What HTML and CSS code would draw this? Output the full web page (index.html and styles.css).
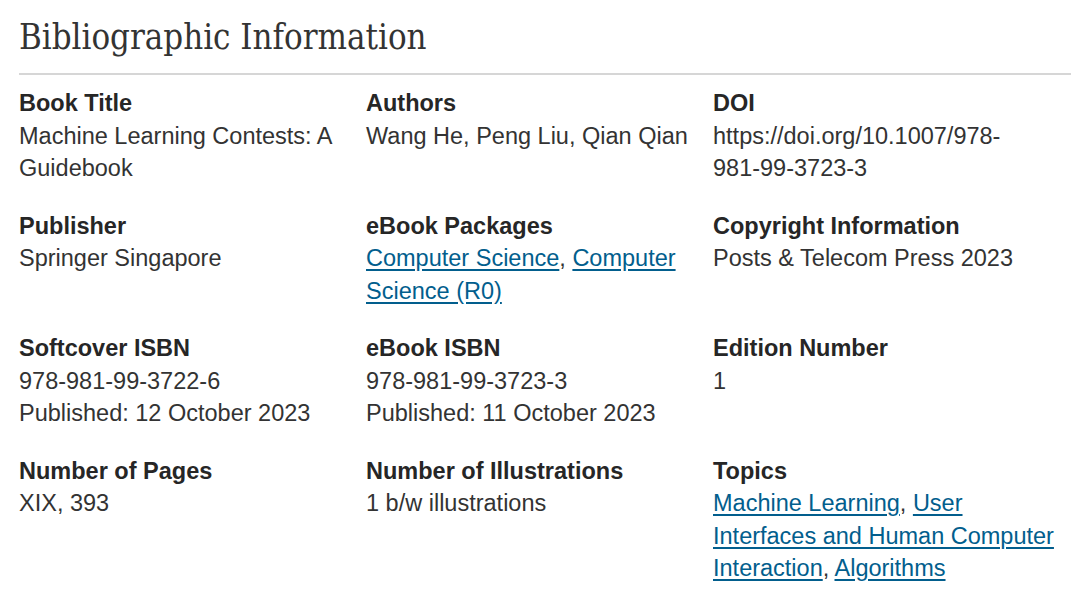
FILE: index.html
```html
<!DOCTYPE html>
<html lang="en">
<head>
<meta charset="utf-8">
<title>Bibliographic Information</title>
<link rel="stylesheet" href="styles.css">
</head>
<body>
<section class="biblio">
  <h2 class="biblio-title">Bibliographic Information</h2>
  <ul class="biblio-grid">
    <li class="item"><span class="label">Book Title</span><span class="value">Machine Learning Contests: A Guidebook</span></li>
    <li class="item"><span class="label">Authors</span><span class="value">Wang He, Peng Liu, Qian Qian</span></li>
    <li class="item"><span class="label">DOI</span><span class="value">https://doi.org/10.1007/978-<span class="nowrap">981-99-3723-3</span></span></li>
    <li class="item"><span class="label">Publisher</span><span class="value">Springer Singapore</span></li>
    <li class="item"><span class="label">eBook Packages</span><span class="value"><a href="#">Computer Science</a>, <a href="#">Computer Science (R0)</a></span></li>
    <li class="item"><span class="label">Copyright Information</span><span class="value">Posts &amp; Telecom Press 2023</span></li>
    <li class="item"><span class="label">Softcover ISBN</span><span class="value">978-981-99-3722-6</span><span class="value">Published: 12 October 2023</span></li>
    <li class="item"><span class="label">eBook ISBN</span><span class="value">978-981-99-3723-3</span><span class="value">Published: 11 October 2023</span></li>
    <li class="item"><span class="label">Edition Number</span><span class="value">1</span></li>
    <li class="item"><span class="label">Number of Pages</span><span class="value">XIX, 393</span></li>
    <li class="item"><span class="label">Number of Illustrations</span><span class="value">1 b/w illustrations</span></li>
    <li class="item"><span class="label">Topics</span><span class="value"><a href="#">Machine Learning</a>, <a href="#">User Interfaces and Human Computer Interaction</a>, <a href="#">Algorithms</a></span></li>
  </ul>
</section>
</body>
</html>
```

FILE: styles.css
```css
html, body {
  margin: 0;
  padding: 0;
  background: #ffffff;
}
.biblio {
  padding: 0 9px 0 19px;
  color: #333333;
  font-family: "Liberation Sans", Arial, sans-serif;
}
.biblio-title {
  margin: 0;
  padding-top: 14px;
  box-sizing: border-box;
  height: 75px;
  font-family: "DejaVu Serif Condensed", "DejaVu Serif", Georgia, serif;
  font-stretch: condensed;
  font-weight: 400;
  font-size: 34.5px;
  line-height: 46px;
  color: #333333;
  border-bottom: 2px solid #d6d6d6;
}
.biblio-grid {
  list-style: none;
  margin: 0;
  padding: 12px 0 0 0;
  display: grid;
  grid-template-columns: 347px 347px 358px;
  row-gap: 25px;
}
.item {
  display: flex;
  flex-direction: column;
  font-size: 23.5px;
  line-height: 32.5px;
}
.label {
  font-weight: 700;
  color: #262626;
}
.value {
  color: #333333;
  padding-right: 10px;
}
.nowrap {
  white-space: nowrap;
}
.value a {
  color: #025e8d;
  text-decoration: underline;
  text-underline-offset: 3px;
}
```
